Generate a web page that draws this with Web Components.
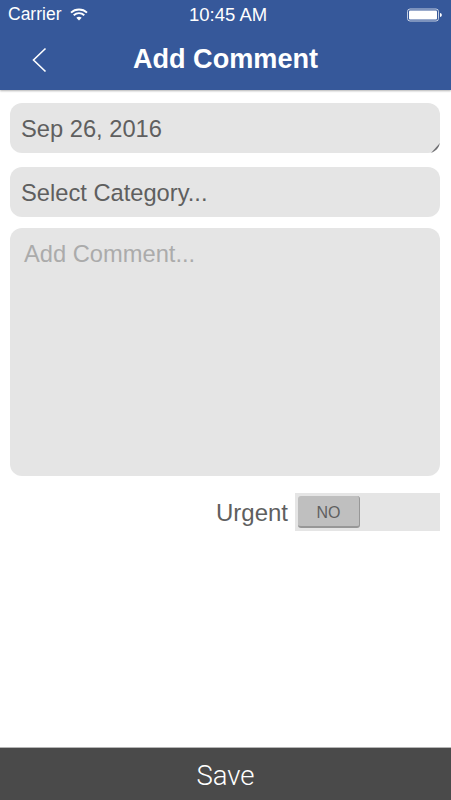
<!DOCTYPE html>
<html>
<head>
<meta charset="utf-8">
<title>Add Comment</title>
<style>
  html, body { margin: 0; height: 100%; background: #fff; }
  body { font-family: "Liberation Sans", Arial, sans-serif; }
  comment-page { height: 800px; }
</style>
</head>
<body>
<comment-page>
  <app-header slot="header" title="Add Comment"></app-header>
  <form-field grip>Sep 26, 2016</form-field>
  <form-field style="margin-top:14px">Select Category...</form-field>
  <comment-box style="margin-top:11px" placeholder="Add Comment..."></comment-box>
  <urgent-toggle label="Urgent" value="NO"></urgent-toggle>
  <save-bar slot="footer">Save</save-bar>
</comment-page>

<script>
class CommentPage extends HTMLElement {
  constructor() {
    super();
    this.attachShadow({ mode: "open" });
    this.shadowRoot.innerHTML = `
      <style>
        :host { display: flex; flex-direction: column; width: 451px; }
        main { flex: 1; display: flex; flex-direction: column; padding: 13px 11px 0 10px; }
      </style>
      <slot name="header"></slot>
      <main><slot></slot></main>
      <slot name="footer"></slot>
    `;
  }
}

class AppHeader extends HTMLElement {
  constructor() {
    super();
    this.attachShadow({ mode: "open" });
    this.shadowRoot.innerHTML = `
      <style>
        :host {
          display: block;
          height: 90px;
          background: #36589a;
          color: #fff;
          box-shadow: 0 1px 2px rgba(0,0,0,.3);
          position: relative;
        }
        .status {
          display: grid;
          grid-template-columns: 181px 78px 1fr;
          align-items: center;
          height: 29px;
          padding: 0 8px;
          font-size: 17.5px;
        }
        .left { display: flex; align-items: center; gap: 9px; }
        .time { font-size: 18.5px; white-space: nowrap; }
        .right { display: flex; justify-content: flex-end; }
        .nav { display: flex; align-items: center; height: 61px; position: relative; }
        .back { margin-left: 31px; width: 32px; }
        h1 {
          position: absolute; left: 0; right: 0; top: 13px;
          margin: 0; text-align: center;
          font-size: 27.1px; line-height: 34px; font-weight: 700;
        }
        svg { display: block; }
      </style>
      <div class="status">
        <div class="left">
          <span>Carrier</span>
          <svg width="18" height="13" viewBox="0 0 18 13">
            <path d="M1 4.6C5.5.4 12.5.4 17 4.6" fill="none" stroke="#fff" stroke-width="1.9"/>
            <path d="M3.7 7.3c3.1-2.7 7.5-2.7 10.6 0" fill="none" stroke="#fff" stroke-width="1.9"/>
            <path d="M6.3 9.7c1.6-1.2 3.8-1.2 5.400 0L9 12.6z" fill="#fff"/>
          </svg>
        </div>
        <span class="time">10:45 AM</span>
        <div class="right">
          <svg width="36" height="14" viewBox="0 0 36 14">
            <rect x=".5" y="1" width="31" height="12" rx="2.5" fill="none" stroke="#fff" stroke-opacity=".7"/>
            <rect x="2" y="2.5" width="28" height="9" rx="1" fill="#fff"/>
            <path d="M33 5v4c1 0 1.800-.8 1.800-2S34 5 33 5z" fill="#fff"/>
          </svg>
        </div>
      </div>
      <div class="nav">
        <div class="back">
          <svg width="16" height="26" viewBox="0 0 16 26">
            <path d="M14.5 1.5 2.5 13 14.5 24.5" fill="none" stroke="#fff" stroke-width="1.6"/>
          </svg>
        </div>
        <h1>${this.getAttribute("title")}</h1>
      </div>
    `;
  }
}

class FormField extends HTMLElement {
  constructor() {
    super();
    this.attachShadow({ mode: "open" });
    const grip = this.hasAttribute("grip")
      ? `<svg width="12" height="12" viewBox="0 0 12 12">
           <path d="M3 12 12 2V12z" fill="#6f6f72"/>
         </svg>`
      : "";
    this.shadowRoot.innerHTML = `
      <style>
        :host {
          display: block;
          position: relative;
          height: 50px;
          box-sizing: border-box;
          padding: 0 11px;
          line-height: 53px;
          background: #e5e5e5;
          border-radius: 12px;
          color: #5f5f5f;
          font-size: 23.7px;
          overflow: hidden;
        }
        svg { position: absolute; right: 0; bottom: 0; display: block; }
      </style>
      <slot></slot>${grip}
    `;
  }
}

class CommentBox extends HTMLElement {
  constructor() {
    super();
    this.attachShadow({ mode: "open" });
    this.shadowRoot.innerHTML = `
      <style>
        :host {
          display: block;
          height: 248px;
          box-sizing: border-box;
          padding: 12px 14px;
          background: #e5e5e5;
          border-radius: 12px;
          color: #ababab;
          font-size: 23.7px;
          line-height: 28px;
        }
      </style>
      ${this.getAttribute("placeholder")}
    `;
  }
}

class UrgentToggle extends HTMLElement {
  constructor() {
    super();
    this.attachShadow({ mode: "open" });
    this.shadowRoot.innerHTML = `
      <style>
        :host {
          display: flex;
          justify-content: flex-end;
          align-items: center;
          gap: 7px;
          margin-top: 17px;
          height: 38px;
          color: #5f5f5f;
          font-size: 24px;
        }
        .label { position: relative; top: 1px; }
        .track {
          width: 145px; height: 38px;
          box-sizing: border-box;
          padding: 3px;
          background: #e5e5e5;
        }
        .knob {
          width: 62px; height: 32px;
          box-sizing: border-box;
          background: #bfbfbf;
          border-radius: 3px;
          border-right: 1px solid #979797;
          border-bottom: 2px solid #979797;
          color: #5f5f5f;
          font-size: 16px;
          text-align: center;
          line-height: 33px;
        }
      </style>
      <span class="label">${this.getAttribute("label")}</span>
      <div class="track"><div class="knob">${this.getAttribute("value")}</div></div>
    `;
  }
}

class SaveBar extends HTMLElement {
  constructor() {
    super();
    this.attachShadow({ mode: "open" });
    this.shadowRoot.innerHTML = `
      <style>
        :host {
          display: block;
          height: 53px;
          box-sizing: border-box;
          border-top: 1px solid #b5b5b5;
          background: #4a4a4a;
          color: #fff;
          text-align: center;
          font-family: Roboto, "Liberation Sans", sans-serif;
          font-size: 27.5px;
          font-weight: 300;
          line-height: 55px;
        }
      </style>
      <slot></slot>
    `;
  }
}

customElements.define("comment-page", CommentPage);
customElements.define("app-header", AppHeader);
customElements.define("form-field", FormField);
customElements.define("comment-box", CommentBox);
customElements.define("urgent-toggle", UrgentToggle);
customElements.define("save-bar", SaveBar);
</script>
</body>
</html>
